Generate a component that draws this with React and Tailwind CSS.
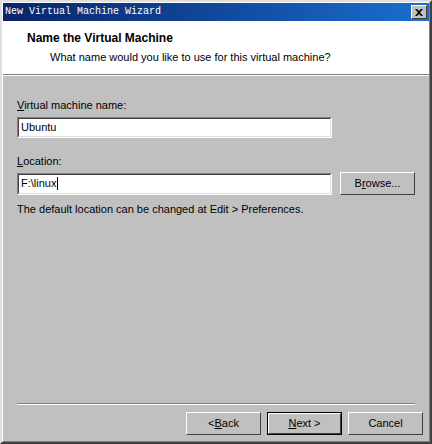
import React from 'react';

const ui = { fontFamily: '"Liberation Sans", Arial, sans-serif' };

function Button({ children, isDefault }) {
  return (
    <div className={`h-[23px] w-[75px] ${isDefault ? 'border border-black' : ''}`}>
      <div className="flex h-full w-full items-center justify-center border-t border-l border-white border-r border-b border-r-[#404040] border-b-[#404040] text-[11px] text-black">
        {children}
      </div>
    </div>
  );
}

export default function App() {
  return (
    <div className="h-[444px] w-[432px] bg-[#c0c0c0] border-t-2 border-l-2 border-t-[#dfdfdf] border-l-[#dfdfdf] border-r-2 border-b-2 border-r-[#404040] border-b-[#404040]" style={ui}>
      <div className="flex h-full flex-col border-t border-l border-white border-r border-b border-r-[#808080] border-b-[#808080]">
        {/* title bar */}
        <div className="flex h-[18px] items-center justify-between bg-gradient-to-r from-[#0a246a] to-[#1a6fd0] pl-[2px] pr-[2px]">
          <span className="text-[10px] leading-none text-white" style={{ fontFamily: '"Liberation Mono", monospace' }}>
            New Virtual Machine Wizard
          </span>
          <div className="flex h-[14px] w-[16px] items-center justify-center border-t border-l border-white border-r border-b border-r-[#404040] border-b-[#404040] bg-[#c0c0c0]">
            <svg width="8" height="7" viewBox="0 0 8 7">
              <path d="M0 0h2l2 2 2-2h2L5 3.5 8 7H6L4 5 2 7H0l3-3.5z" fill="black" />
            </svg>
          </div>
        </div>

        {/* header */}
        <div className="h-[54px] border-b border-b-[#808080] bg-white pl-[24px] pt-[10px]">
          <div className="text-[12px] font-bold leading-[14px] text-black">Name the Virtual Machine</div>
          <div className="pl-[23px] pt-[5px] text-[11px] leading-[14px] text-black">What name would you like to use for this virtual machine?</div>
        </div>
        <div className="h-px bg-white" />

        {/* body */}
        <div className="flex flex-1 flex-col px-[14px] pt-[22px]">
          <div className="text-[11px] leading-[14px] text-black">
            <span className="underline">V</span>irtual machine name:
          </div>
          <div className="mt-[5px] h-[21px] w-[315px] border-t border-l border-[#808080] border-r border-b border-r-white border-b-white">
            <div className="h-full border-t border-l border-[#404040] border-r border-b border-r-[#dfdfdf] border-b-[#dfdfdf] bg-white pl-[2px] text-[11px] leading-[17px] text-black">
              Ubuntu
            </div>
          </div>

          <div className="mt-[16px] text-[11px] leading-[14px] text-black">
            <span className="underline">L</span>ocation:
          </div>
          <div className="mt-[4px] flex items-center gap-[8px]">
            <div className="h-[22px] w-[315px] border-t border-l border-[#808080] border-r border-b border-r-white border-b-white">
              <div className="flex h-full items-center border-t border-l border-[#404040] border-r border-b border-r-[#dfdfdf] border-b-[#dfdfdf] bg-white pl-[2px] text-[11px] text-black">
                F:\linux<span className="ml-px inline-block h-[13px] w-px bg-black" />
              </div>
            </div>
            <Button>
              B<span className="underline">r</span>owse...
            </Button>
          </div>
          <div className="mt-[7px] text-[11px] leading-[14px] text-black">
            The default location can be changed at Edit &gt; Preferences.
          </div>
        </div>

        {/* footer */}
        <div className="mx-[14px] h-px bg-[#808080]" />
        <div className="mx-[14px] h-px bg-white" />
        <div className="flex justify-end gap-[6px] pr-[6px] pt-[7px] pb-[6px]">
          <Button>
            &lt; <span className="underline">B</span>ack
          </Button>
          <Button isDefault>
            <span className="underline">N</span>ext &gt;
          </Button>
          <Button>Cancel</Button>
        </div>
      </div>
    </div>
  );
}
